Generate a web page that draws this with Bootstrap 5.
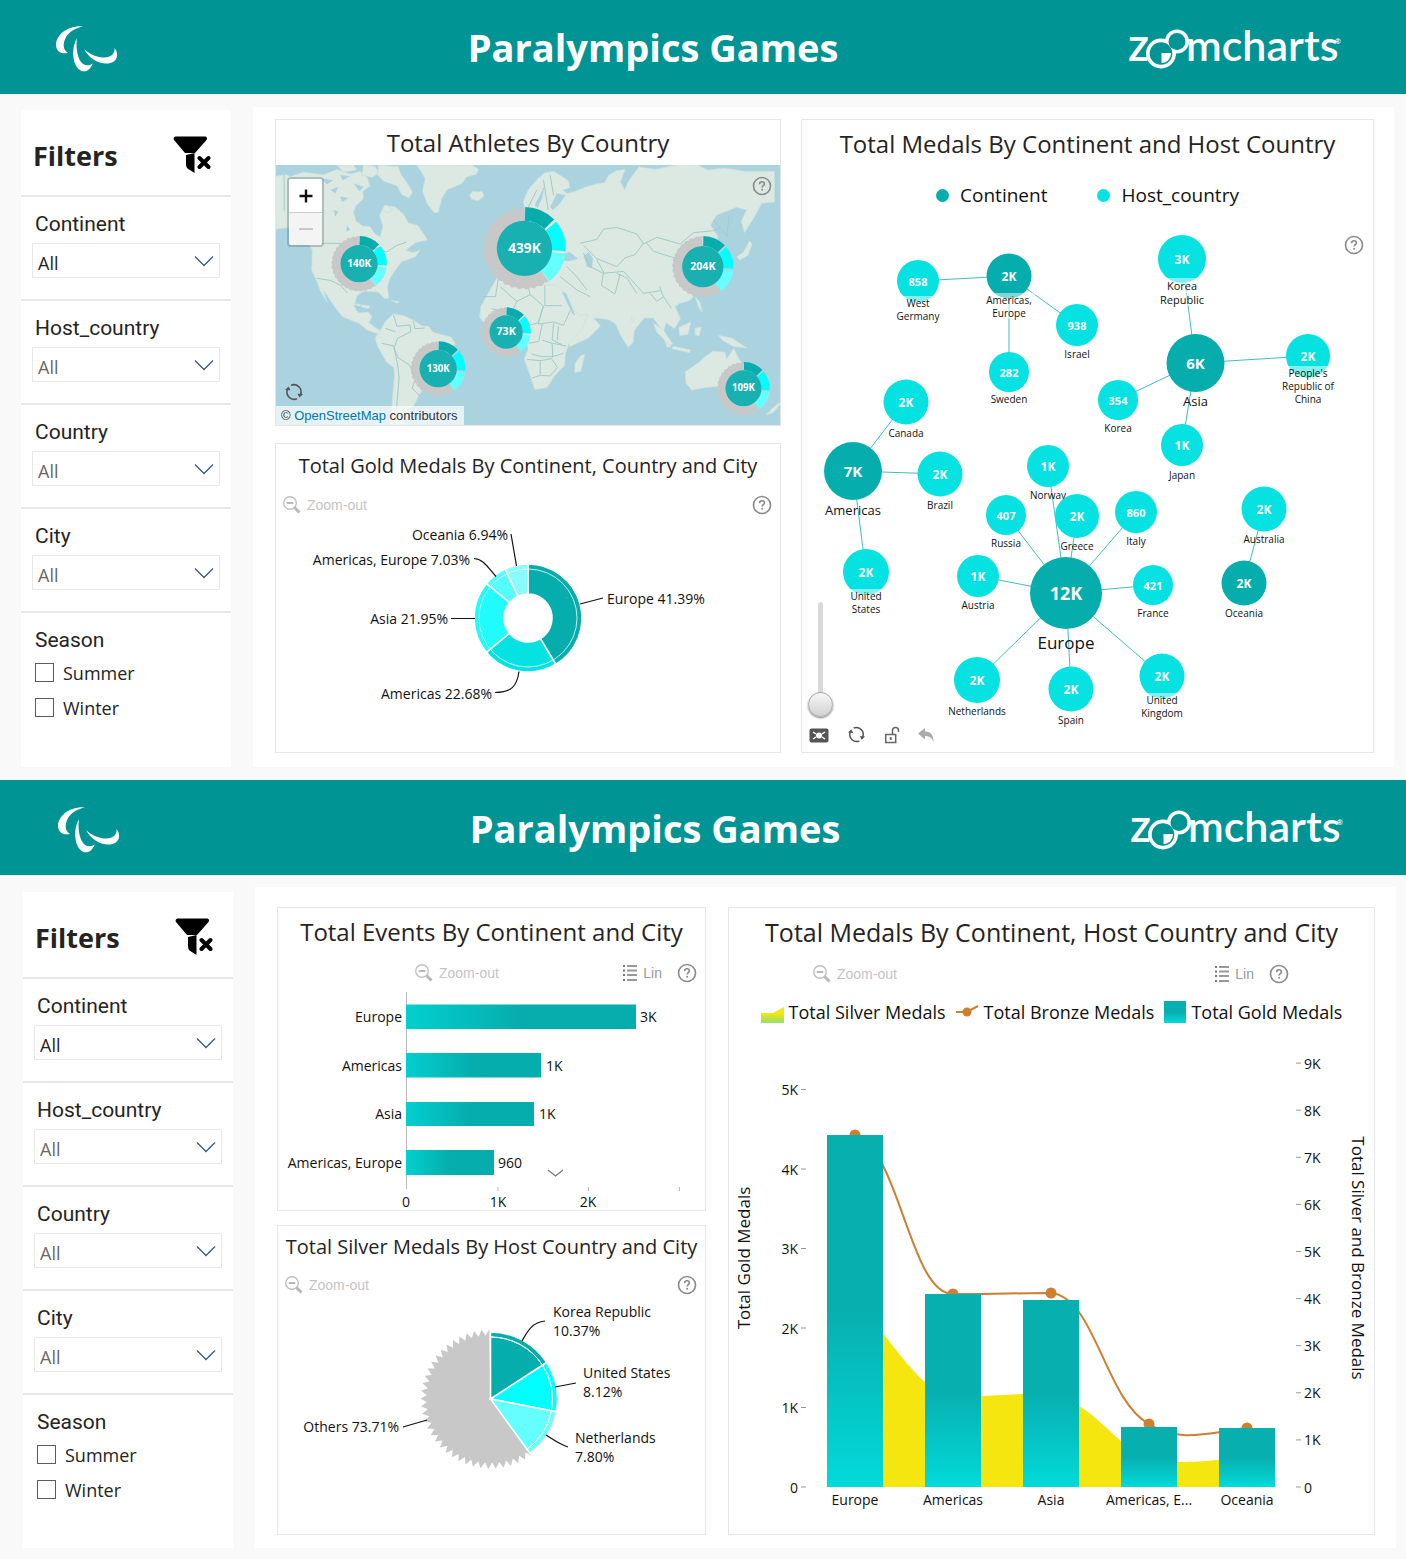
<!DOCTYPE html>
<html lang="en">
<head>
<meta charset="utf-8">
<meta name="viewport" content="width=device-width, initial-scale=1">
<title>Paralympics Games</title>
<link href="https://cdn.jsdelivr.net/npm/bootstrap@5.3.0/dist/css/bootstrap.min.css" rel="stylesheet">
<style>
  :root { --teal: #009494; --deep: #06adad; --aqua: #06e1e1; }
  body { font-family: "Open Sans", "Noto Sans", sans-serif; background: #f9f9f9; color: #252423; }
  .sprite { width: 0; height: 0; }
  .board { min-height: 780px; display: flex; flex-direction: column; }
  .board-second { min-height: 779px; }
  .topbar { height: 94px; background: var(--teal); padding: 0 64px 0 56px; }
  .board-second .topbar { height: 95px; padding: 0 62px 0 58px; }
  .topbar h1 { font-size: 38px; line-height: 48px; font-weight: 700; color: #fff; }
  .agitos-box { width: 124px; }
  .agitos-box svg { display: block; margin-left: -6px; }
  .board-body { padding: 13px 12px 13px 21px; gap: 22px; flex: 1 1 auto; }
  .board-second .board-body { padding: 12px 10px 11px 23px; }
  .side { flex: 0 0 210px; background: #fff; margin-top: 3px; }
  .board-second .side { margin-top: 5px; }
  .side-head { height: 85px; padding: 8px 20px 0 12px; }
  .side-head h2 { font-size: 27px; font-weight: 700; }
  .side-head .tool { margin-top: -4px; }
  .slicer { border-top: 2px solid #e6e6e6; padding: 13px 11px 21px 11px; }
  .slicer-name { font-family: Roboto, sans-serif; font-size: 21px; line-height: 28px; padding-left: 3px; margin-bottom: 5px; }
  .slicer .form-select { height: 35px; border: 1px solid #e8e8e8; border-radius: 0; font-size: 18px; line-height: 24px; padding: 7px 34px 2px 5px; color: #252423;
    --bs-form-select-bg-img: url("data:image/svg+xml,%3Csvg xmlns='http://www.w3.org/2000/svg' viewBox='0 0 20 12'%3E%3Cpath d='M1 1.500l9 9 9-9' fill='none' stroke='%23395a78' stroke-width='1.300'/%3E%3C/svg%3E");
    background-size: 20px 12px; background-position: right 5px center; }
  .slicer .muted-choice { color: #6b6967; }
  .season .form-check { min-height: 0; margin: 0; padding-left: 31px; height: 35px; }
  .season .form-check-input { width: 19px; height: 19px; margin: 4px 0 0 -28px; border: 1px solid #5c5c5c; border-radius: 0; }
  .season .form-check-label { font-size: 18px; line-height: 28px; }
  .stage { background: #fff; padding: 12px 20px 14px 22px; gap: 20px; }
  .board-second .stage { padding: 20px 21px 13px 22px; gap: 22px; }
  .col-a1 { flex: 506 1 0; gap: 17px; }
  .col-a2 { flex: 573 1 0; }
  .col-b1 { flex: 429 1 0; gap: 14px; }
  .col-b2 { flex: 647 1 0; }
  .tile { border: 1px solid #e6e6e6; background: #fff; position: relative; }
  .tile h3 { font-size: 24px; line-height: 48px; font-weight: 400; margin: 0; text-align: center; white-space: nowrap; }
  .map-tile h3 { line-height: 45px; }
  .tile .title-m { font-size: 20px; line-height: 44px; }
  .tile .title-s { font-size: 20px; line-height: 42px; }
  .tile .title-l { font-size: 25px; }
  .tile svg.plot { display: block; width: 100%; height: auto; }
  .tools { height: 34px; padding: 0 8px 0 6px; font-family: "Liberation Sans", Arial, sans-serif; }
  .tools-mid { padding-left: 136px; }
  .tools-wide { height: 36px; padding: 0 85px 0 83px; }
  .tool { border: 0; background: none; padding: 0; display: flex; align-items: center; gap: 5px; font-size: 14px; line-height: 20px; color: #c4c4c4; }
  .tool svg { display: block; }
  .tool-lin { color: #9a9a9a; }
  .tool-gap { margin-right: 15px; }
  .map-box { position: relative; height: 260px; overflow: hidden; background: #aad3df; }
  .map-box svg.plot { height: 100%; }
  .map-help { position: absolute; top: 11px; right: 8px; }
  .zoomer { position: absolute; top: 12px; left: 11px; border: 2px solid rgba(90,110,115,.35); border-radius: 4px; overflow: hidden; }
  .zoomer button { display: block; width: 33px; height: 33px; border: 0; background: #fff; padding: 0; }
  .zoomer button + button { background: #f4f4f4; border-top: 1px solid #ccc; }
  .zoomer svg { display: block; margin: auto; }
  .map-reload { position: absolute; left: 8px; bottom: 23px; }
  .credit { position: absolute; left: 0; bottom: 0; background: rgba(255,255,255,.7); font: 13px/19px "Liberation Sans", Arial, sans-serif; color: #333; padding: 0 6px 0 5px; }
  .credit a { color: #0078a8; text-decoration: none; }
  .key-row { height: 54px; gap: 50px; font-size: 19px; line-height: 28px; color: #111; }
  .key-row span { display: flex; align-items: center; gap: 11px; }
  .dot { width: 13px; height: 13px; border-radius: 50%; background: var(--aqua); }
  .dot-deep { background: var(--deep); }
  .key-wide { height: 40px; gap: 10px; font-size: 18px; line-height: 24px; color: #111; white-space: nowrap; }
  .key-wide span { display: flex; align-items: center; gap: 5px; }
  .net-help { position: absolute; right: 9px; top: 115px; }
  .net-slider { position: absolute; left: 8px; bottom: 35px; width: 22px; height: 115px; }
  .net-slider input { position: absolute; left: -1px; top: 115px; width: 115px; height: 22px; transform: rotate(-90deg); transform-origin: 0 0; margin: 0; appearance: none; background: none; }
  .net-slider input::-webkit-slider-runnable-track { height: 5px; background: #d9d9d9; border-radius: 3px; }
  .net-slider input::-webkit-slider-thumb { appearance: none; width: 25px; height: 25px; margin-top: -10px; border-radius: 50%; border: 1px solid #aaa; background: linear-gradient(90deg, #d2d2d2, #f6f6f6); box-shadow: -1px 0 2px rgba(0,0,0,.5); }
  .net-tools { position: absolute; left: 7px; bottom: 8px; gap: 18px; }
  svg text { font-size: 14px; fill: #111; dominant-baseline: central; }
  svg .num { fill: #fff; font-weight: 700; }
  svg .end { text-anchor: end; }
  svg .mid { text-anchor: middle; }
  svg .axis-name { font-size: 17px; }
  .lead-line { fill: none; stroke: #111; stroke-width: 1.2; }
</style>
</head>
<body>
<svg class="sprite position-absolute" aria-hidden="true">
  <defs>
    <symbol id="agitos" viewBox="50 15 75 60">
      <g fill="#fff"><path d="M83 24.300C66 23.500 56 34 56 43c.3 7 6 9.500 12 7.800-5-2.500-5.500-9-2.300-15C69 29.500 76 26 83 24.300z"/><path d="M77 36c-5.500 9-5 24 1 30.500 5.500 5.500 12 2.500 14.700-5-4.700 3.300-10 2.300-13-3.500C76.500 51 76 43 77 36z"/><path d="M84 47c5 9 13 14.300 22.500 14.500 11 .2 13-9.500 8-15.500.5 6-4 10-11.500 9.500C95 55 89 51.500 84 47z"/></g>
    </symbol>
    <symbol id="zoomcharts" viewBox="1128 20 216 58">
      <g fill="#fff"><circle cx="1163" cy="55.500" r="15"/><circle cx="1179" cy="43.500" r="12"/></g>
      <g fill="#009494"><circle cx="1163" cy="55.500" r="11.300"/><circle cx="1179" cy="43.500" r="8.500"/></g>
      <path d="M1163.500 55h9.500v1a9.500 9.500 0 0 1-9.500 9z" fill="#fff"/>
      <g style="font-family:Lato,sans-serif;font-weight:600"><text x="1130" y="62.500" style="font-size:46px;fill:#fff;dominant-baseline:auto">z</text><text x="1188" y="62.500" style="font-size:43px;fill:#fff;dominant-baseline:auto">mcharts</text><text x="1337" y="46" style="font-size:7px;fill:#fff;dominant-baseline:auto">®</text></g>
    </symbol>
    <symbol id="funnel" viewBox="173 133 38 39">
      <path d="M175.500 134.500h30q2.500 1 1 3.500L195 151h-10L174 138q-1.300-2.500 1.500-3.500zM186 153l8.500-2v20l-7-4.500q-1.500-2-1.500-4z"/><path d="M199.500 156l9 9m0-9l-9 9" stroke="#000" stroke-width="4" stroke-linecap="round"/>
    </symbol>
    <symbol id="help" viewBox="0 0 20 20"><circle cx="10" cy="10" r="8.500" fill="none" stroke="#8a8a8a" stroke-width="1.600"/><path d="M7.600 8.200c0-1.500 1-2.400 2.400-2.400s2.400.9 2.400 2.100c0 1.600-2.300 1.700-2.300 3.500" fill="none" stroke="#8a8a8a" stroke-width="1.600"/><circle cx="10.100" cy="13.700" r="1" fill="#8a8a8a"/></symbol>
    <symbol id="lens" viewBox="0 0 20 20"><circle cx="8" cy="8" r="6.300" fill="none" stroke="#c0c0c0" stroke-width="1.400"/><path d="M4.700 8h6.600" stroke="#b0b0b0" stroke-width="1.800"/><path d="M12.500 12.500l5 5" stroke="#b8b8b8" stroke-width="3"/></symbol>
    <symbol id="rows" viewBox="0 0 16 18"><path d="M1 2h2m-2 4.500h2M1 11h2m-2 5h2" stroke="#777" stroke-width="2"/><path d="M5 2h10M5 6.500h10M5 11h10M5 16h10" stroke="#999" stroke-width="1.800"/></symbol>
    <symbol id="reload" viewBox="0 0 20 20"><path d="M7 3.200a7.300 7.300 0 0 1 9.500 9.500M13 16.800A7.300 7.300 0 0 1 3.500 7.300" fill="none" stroke="#555" stroke-width="1.600"/><path d="M13.500 11.700l5.500.3-3.500 3.500zM6.500 8.300L1 8l3.500-3.500z" fill="#555"/></symbol>
    <linearGradient id="barX"><stop offset="0" stop-color="#02cfcf"/><stop offset=".5" stop-color="#06adad"/></linearGradient>
    <linearGradient id="barY" x1="0" x2="0" y1="0" y2="1"><stop offset=".5" stop-color="#08afaf"/><stop offset="1" stop-color="#02dada"/></linearGradient>
    <linearGradient id="silver" x1="0" x2="0" y1="0" y2="1"><stop offset=".4" stop-color="#f4e60e"/><stop offset="1" stop-color="#8fe070"/></linearGradient>
  </defs>
</svg>

<section class="board">
  <header class="topbar d-flex align-items-center">
    <div class="agitos-box"><svg width="75" height="60" viewBox="0 0 75 60"><use href="#agitos"/></svg></div>
    <h1 class="flex-fill text-center m-0">Paralympics Games</h1>
    <svg width="216" height="58" role="img" aria-label="zoomcharts"><use href="#zoomcharts"/></svg>
  </header>
  <div class="board-body d-flex">
    <aside class="side">
      <div class="side-head d-flex align-items-center justify-content-between"><h2 class="m-0">Filters</h2><button class="tool" aria-label="Clear filters"><svg width="38" height="39"><use href="#funnel"/></svg></button></div>
      <div class="slicer"><label class="slicer-name d-block" for="f1">Continent</label><select class="form-select" id="f1"><option>All</option></select></div>
      <div class="slicer"><label class="slicer-name d-block" for="f2">Host_country</label><select class="form-select muted-choice" id="f2"><option>All</option></select></div>
      <div class="slicer"><label class="slicer-name d-block" for="f3">Country</label><select class="form-select muted-choice" id="f3"><option>All</option></select></div>
      <div class="slicer"><label class="slicer-name d-block" for="f4">City</label><select class="form-select muted-choice" id="f4"><option>All</option></select></div>
      <div class="slicer season" role="group" aria-labelledby="season1"><div class="slicer-name" id="season1">Season</div>
        <div class="form-check"><input class="form-check-input" type="checkbox" id="s1"><label class="form-check-label" for="s1">Summer</label></div>
        <div class="form-check"><input class="form-check-input" type="checkbox" id="s2"><label class="form-check-label" for="s2">Winter</label></div>
      </div>
    </aside>
    <main class="stage d-flex flex-fill">
      <div class="col-a1 d-flex flex-column">
        <div class="tile map-tile">
          <h3>Total Athletes By Country</h3>
          <div class="map-box">
            <svg class="plot" viewBox="16 165 1515 780" preserveAspectRatio="xMidYMid slice">
              <g fill="#dbe9e2" stroke="#c6dfdc" stroke-width="2" stroke-linejoin="round">
                <path d="M16 200l30-8 14 8 40-14 60 8 40-16 40 14 30-8 22 20 8 24-22 16 2 22-24 22-6 20 8 26 20 14 22 2 14 22 16 8 8-30-10-34 16-30 30 4 26 22 14 26 28 8 22 30 8 14-36 8-28 22 18 8 24-8-14 20-42 16-20 26-14 22-8 26 4 34-12 2-20-20-44-2-20 14-8 32 12 18 30-2 12 14-10 18 22 16 14 10-8 8-34-12-24-20-50-20-30-40-22-34-4-2 12 34-22-36-10-28-16-34 2-60-24-46-40-22-45 6z"/>
                <path d="M325 165l60 5 8 24 16 22 18 30-10 18-22-10-14-26-40-14-20-20zM280 165l35 4 10 20-20 14-30-8zM200 165h50l10 14-40 8zM345 285l22 12-10 12-22-8z"/>
                <path d="M440 165h165l20 12-6 16-30 8-14 20-44 18-16 26-10 42-12 2-22-28-14-38 8-36-12-22zM598 256l10-12 14 2 14-2 6 14-18 14-20-4zM695 330l16-8 8 20 14 22-2 16-34 4 12-18zM675 350l14-4 2 22-18 4z"/>
                <path d="M345 635l24-24 32 6 30 14 24 16 20 2 14 18 54 14 12 20-24 40-30 58-32 22-22 34-18 36-22 10-8 42h-38l6-80 6-70-2-20-22-16-28-50-6-24 14-20z"/>
                <path d="M765 300l-6-26 16-36 24-28 24-22 28-4 44 28 4 22-22 6 14 10 24-6 34-14 28-8 26-4 12-22 24-14 26-4-14 38 12 24 14-30 30-40 46 8 60-12 60-6 40 20 50-6 60 10h90v92l-38 4-14 26-20 34-18 28-10-34 16-34-30-8-60 24-18 30 22 32-2 32-30 24-20 14 8 40-10 46-30 38-30 8-14 10 16 36-18 30-26-18-6 24 22 48-12 2-22-60-20-28-26 0-30 36-4 38-16 14-22-36-16-36-24-12-40-4 20 24-36 36-56 26-24-54-16-36-4-34-60-10-40-14 16 36-14 8-34-40-20 22-50 12 4-38 28-16 10-28 40-22 50-16-12-34z"/>
                <path d="M680 505l56-2 26 10 40 12 56 0 28 24 28 54 18 14 22-4-18 44-38 40-12 34-2 34-30 32-24 36-36 6-12-36-20-56 12-32-16-36-20-24-46-4-38 4-26-34 4-32 28-50zM930 738l14-6-12 52-18 4 0-26z"/>
                <path d="M1245 785l44-30 14-14 26-18 36 4 4 20 22-32 16 34 28 28 26 40-8 50-20 22-30-6-20-30-34-24-44 4-40 8-18-22zM1525 880l6 2-22 26-20 6 14-16zM1150 640l28 18 30 44-10 4-38-40zM1208 708l54 12-4 8-52-12zM1226 652l36-16-8 36-26 6zM1345 676l40 8 46 30-40-4-36-20zM1274 655l20-4-8 28-10-4z"/>
                <path d="M250 580l50 8-6 8-30-8zM362 572l26 2-6 6zM1275 560l14 16 8 32-12-16zM1084 620l8 8-4 10-6-6zM1400 440l20-14 18-34 8 10-12 34-26 14z"/>
              </g>
              <g fill="#aad3df"><path d="M940 440l14-14 14 18-2 30-16-4-4-16zM870 434l28-8 26 20-30 8-24-4zM860 250l26 6-16 24-22 20-8-10 12-22zM812 250l12-26-8 40-14 30-8-10zM250 220l30 10-12 14zM180 240l24-10-8 20zM110 220l30-8-14 18zM310 415l20-4 6 14-20 0zM875 545l12 4 28 66-8-2zM150 205l40 6-20 12zM210 260l26 4-20 12zM190 300l14 4-8 16zM230 345l10 14-12 6zM210 195l30 4-22 12z"/></g>
              <g fill="none" stroke="#a2cbc9" stroke-width="3" stroke-linejoin="round">
                <path d="M42 192v110M125 400h165l30 20 30 6 30-20 30-10M140 505l40 6 30 14 22 24M260 600l20-22"/>
                <path d="M370 615l10 34 40-4 2 20-40 20-10 30 12 28 34 22 18 40-10 30 22 22M345 655l30 10M335 700l36 8 12 60 4 36-8 90-4 50M430 632l4 24 30-2"/>
                <path d="M800 240l-30 60M840 195l10 60M820 210l14 90M930 400l50-12 20-30 40-6 60 20 20 30 40-20 70 20 40-34 60-6 20-10M1120 400l-26 34-30 10-24 26-60-24-40-40M1130 400l20 24 70 22 60-26 4-40M940 430l20 40 40 20 60-6 60 66 50-8M980 450l20 36-6 40 40 26 16-60M1040 490l30 14 30 46M890 470l30 30 30 40M870 500l50 40 40 20M1140 550l20 24 20-14 24 36M1180 560l-12-30M1330 330l40 50 6-60"/>
                <path d="M640 560h36l8-52M690 530l50 44-16 36-60-14M740 574l40-20-10-40M824 527v60l50 0M780 554l40 34-16 50-46 14M675 600l2 38M700 600l10 36M820 588l-16 54 46-6 30 10 20-44M850 640l-4 50 30 14M776 700l30-6 10-52M816 690l30 10 2 40-34 0-30-8M770 748l40 4 0 44-24 8M810 752l34-6 18 26-22 26-28-2M848 700l40 8M846 740l34-10M865 650l-4 40"/>
              </g>
              <g id="map-markers"></g>
            </svg>
            <div class="zoomer"><button aria-label="Zoom in"><svg width="16" height="16"><path d="M8 1.500v13M1.500 8h13" stroke="#111" stroke-width="2.400"/></svg></button><button aria-label="Zoom out"><svg width="16" height="16"><path d="M1 8h14" stroke="#bbb" stroke-width="1.600"/></svg></button></div>
            <button class="tool map-help" aria-label="Help"><svg width="20" height="20"><use href="#help"/></svg></button>
            <button class="tool map-reload" aria-label="Reload map"><svg width="20" height="20"><use href="#reload"/></svg></button>
            <div class="credit">© <a href="#">OpenStreetMap</a> contributors</div>
          </div>
        </div>
        <div class="tile flex-fill">
          <h3 class="title-m">Total Gold Medals By Continent, Country and City</h3>
          <div class="tools d-flex align-items-center justify-content-between"><button class="tool"><svg width="20" height="20"><use href="#lens"/></svg>Zoom-out</button><button class="tool" aria-label="Help"><svg width="20" height="20"><use href="#help"/></svg></button></div>
          <svg class="plot" viewBox="276 522 504 228">
            <g id="gold-ring"></g>
            <path class="lead-line" d="M511 534l5.500 32M474 558.500c9 0 14 9 22 18M451 618.500h24M495 692.500c16 0 22-6 24-21M580 604l23-6"/>
            <text class="end" x="508" y="534">Oceania 6.94%</text><text class="end" x="470" y="559">Americas, Europe 7.03%</text><text class="end" x="448" y="618">Asia 21.95%</text><text class="end" x="492" y="693">Americas 22.68%</text><text x="607" y="598">Europe 41.39%</text>
          </svg>
        </div>
      </div>
      <div class="col-a2 d-flex">
        <div class="tile flex-fill">
          <h3>Total Medals By Continent and Host Country</h3>
          <div class="key-row d-flex align-items-center justify-content-center"><span><i class="dot dot-deep"></i>Continent</span><span><i class="dot"></i>Host_country</span></div>
          <svg class="plot" viewBox="802 222 571 529"><g id="network"></g></svg>
          <button class="tool net-help" aria-label="Help"><svg width="20" height="20"><use href="#help"/></svg></button>
          <div class="net-slider"><input type="range" min="0" max="100" value="0" aria-label="Zoom level"></div>
          <div class="net-tools d-flex align-items-center">
            <button class="tool" aria-label="Fit to view"><svg width="20" height="18"><rect x=".5" y="2.500" width="19" height="14" rx="2" fill="#555"/><circle cx="10" cy="9.500" r="3" fill="#fff"/><path d="M4 6l3 2m6 3l3 2m0-7l-3 2m-6 3l-3 2" stroke="#fff" stroke-width="1.500"/></svg></button>
            <button class="tool" aria-label="Reload"><svg width="19" height="19" viewBox="0 0 20 20"><use href="#reload"/></svg></button>
            <button class="tool" aria-label="Unlock"><svg width="16" height="18"><path d="M1.700 8.500h10v8h-10z" fill="none" stroke="#666" stroke-width="1.500"/><path d="M8.500 8V4.500c0-4 6-4 6 0V6" fill="none" stroke="#666" stroke-width="1.500"/><path d="M6.700 11v3" stroke="#666" stroke-width="1.800"/></svg></button>
            <button class="tool" aria-label="Back"><svg width="16" height="16"><path d="M0 6.500L7 1v3.500c6 0 8.500 4 8.500 10.500C14 11 11.500 9 7 9v3.500z" fill="#aaa"/></svg></button>
          </div>
        </div>
      </div>
    </main>
  </div>
</section>

<section class="board board-second">
  <header class="topbar d-flex align-items-center">
    <div class="agitos-box"><svg width="75" height="60" viewBox="0 0 75 60"><use href="#agitos"/></svg></div>
    <h1 class="flex-fill text-center m-0">Paralympics Games</h1>
    <svg width="216" height="58" role="img" aria-label="zoomcharts"><use href="#zoomcharts"/></svg>
  </header>
  <div class="board-body d-flex">
    <aside class="side">
      <div class="side-head d-flex align-items-center justify-content-between"><h2 class="m-0">Filters</h2><button class="tool" aria-label="Clear filters"><svg width="38" height="39"><use href="#funnel"/></svg></button></div>
      <div class="slicer"><label class="slicer-name d-block" for="g1">Continent</label><select class="form-select" id="g1"><option>All</option></select></div>
      <div class="slicer"><label class="slicer-name d-block" for="g2">Host_country</label><select class="form-select muted-choice" id="g2"><option>All</option></select></div>
      <div class="slicer"><label class="slicer-name d-block" for="g3">Country</label><select class="form-select muted-choice" id="g3"><option>All</option></select></div>
      <div class="slicer"><label class="slicer-name d-block" for="g4">City</label><select class="form-select muted-choice" id="g4"><option>All</option></select></div>
      <div class="slicer season" role="group" aria-labelledby="season2"><div class="slicer-name" id="season2">Season</div>
        <div class="form-check"><input class="form-check-input" type="checkbox" id="t1"><label class="form-check-label" for="t1">Summer</label></div>
        <div class="form-check"><input class="form-check-input" type="checkbox" id="t2"><label class="form-check-label" for="t2">Winter</label></div>
      </div>
    </aside>
    <main class="stage d-flex flex-fill">
      <div class="col-b1 d-flex flex-column">
        <div class="tile">
          <h3>Total Events By Continent and City</h3>
          <div class="tools tools-mid d-flex align-items-center"><button class="tool me-auto"><svg width="20" height="20"><use href="#lens"/></svg>Zoom-out</button><button class="tool tool-lin tool-gap"><svg width="16" height="18"><use href="#rows"/></svg>Lin</button><button class="tool" aria-label="Help"><svg width="20" height="20"><use href="#help"/></svg></button></div>
          <svg class="plot" viewBox="278 990 427 220">
            <path d="M406.500 992v197M498 1187v4M588.500 1187v4M679.500 1187v4" stroke="#b8b8b8"/>
            <g fill="url(#barX)"><rect x="406" y="1004.500" width="230" height="24.500"/><rect x="406" y="1053" width="135" height="24.500"/><rect x="406" y="1102" width="128" height="24"/><rect x="406" y="1150" width="88" height="25"/></g>
            <text class="end" x="402" y="1016">Europe</text><text class="end" x="402" y="1065">Americas</text><text class="end" x="402" y="1113">Asia</text><text class="end" x="402" y="1162">Americas, Europe</text>
            <text x="640" y="1016">3K</text><text x="546" y="1065">1K</text><text x="539" y="1113">1K</text><text x="498" y="1162">960</text>
            <text class="mid" x="406" y="1201">0</text><text class="mid" x="498" y="1201">1K</text><text class="mid" x="588" y="1201">2K</text>
            <path d="M548 1170l7.500 6 7.500-6" fill="none" stroke="#777" stroke-width="1.200"/>
          </svg>
        </div>
        <div class="tile flex-fill">
          <h3 class="title-s">Total Silver Medals By Host Country and City</h3>
          <div class="tools d-flex align-items-center justify-content-between"><button class="tool"><svg width="20" height="20"><use href="#lens"/></svg>Zoom-out</button><button class="tool" aria-label="Help"><svg width="20" height="20"><use href="#help"/></svg></button></div>
          <svg class="plot" viewBox="278 1302 427 230">
            <g id="silver-pie"></g>
            <path class="lead-line" d="M522 1341c5-9 10-19 23-20M555 1387l21-4M546 1435c8 5 13 9 22 12M403 1427l24-7"/>
            <text x="553" y="1311">Korea Republic</text><text x="553" y="1330">10.37%</text><text x="583" y="1372">United States</text><text x="583" y="1391">8.12%</text><text x="575" y="1437">Netherlands</text><text x="575" y="1456">7.80%</text><text class="end" x="399" y="1426">Others 73.71%</text>
          </svg>
        </div>
      </div>
      <div class="col-b2 d-flex">
        <div class="tile flex-fill">
          <h3 class="title-l">Total Medals By Continent, Host Country and City</h3>
          <div class="tools tools-wide d-flex align-items-center"><button class="tool me-auto"><svg width="20" height="20"><use href="#lens"/></svg>Zoom-out</button><button class="tool tool-lin tool-gap"><svg width="16" height="18"><use href="#rows"/></svg>Lin</button><button class="tool" aria-label="Help"><svg width="20" height="20"><use href="#help"/></svg></button></div>
          <div class="key-wide d-flex align-items-center justify-content-center">
            <span><svg width="23" height="22"><path d="M0 12h12l11-6v16H0z" fill="url(#silver)"/></svg>Total Silver Medals</span>
            <span><svg width="23" height="22"><path d="M0 11h11l11-6" fill="none" stroke="#cd7f32" stroke-width="2"/><circle cx="11" cy="11" r="4.500" fill="#cd7f32"/></svg>Total Bronze Medals</span>
            <span><svg width="22" height="22"><path d="M0 0h22v22H0z" fill="url(#barY)"/></svg>Total Gold Medals</span>
          </div>
          <svg class="plot" viewBox="729 1032 645 500">
            <path d="M855 1302C875 1318 900 1360 925 1382C938 1394 960 1397 981 1396L1023 1394C1050 1390 1060 1394 1079 1406C1095 1416 1106 1428 1121 1441C1140 1460 1160 1462 1177 1462C1195 1462 1205 1461 1219 1460L1247 1458V1487H855Z" fill="#f4e60e"/>
            <path d="M855 1135C900 1150 910 1294 953 1294C980 1294.500 1020 1293 1051 1293C1095 1297 1105 1400 1149 1424C1180 1444 1210 1432 1247 1428" fill="none" stroke="#cd7f32" stroke-width="2"/>
            <g fill="#cd7f32"><circle cx="855" cy="1135" r="5.500"/><circle cx="953" cy="1294" r="5.500"/><circle cx="1149" cy="1424" r="5.500"/><circle cx="1247" cy="1428" r="5.500"/></g>
            <g fill="url(#barY)"><rect x="827" y="1135" width="56" height="352"/><rect x="925" y="1294" width="56" height="193"/><rect x="1023" y="1300" width="56" height="187"/><rect x="1121" y="1427" width="56" height="60"/><rect x="1219" y="1428" width="56" height="59"/></g>
            <circle cx="1051" cy="1293" r="5.500" fill="#cd7f32"/>
            <g id="axes"></g>
            <text class="mid" x="855" y="1499">Europe</text><text class="mid" x="953" y="1499">Americas</text><text class="mid" x="1051" y="1499">Asia</text><text class="mid" x="1149" y="1499">Americas, E...</text><text class="mid" x="1247" y="1499">Oceania</text>
            <text class="mid axis-name" transform="translate(743 1258) rotate(-90)">Total Gold Medals</text>
            <text class="mid axis-name" transform="translate(1358 1258) rotate(90)">Total Silver and Bronze Medals</text>
          </svg>
        </div>
      </div>
    </main>
  </div>
</section>

<script src="https://cdn.jsdelivr.net/npm/bootstrap@5.3.0/dist/js/bootstrap.bundle.min.js"></script>
<script>
  const pt = (cx, cy, r, deg) => {
    const a = (deg - 90) * Math.PI / 180;
    return (cx + r * Math.cos(a)).toFixed(2) + ' ' + (cy + r * Math.sin(a)).toFixed(2);
  };
  // Ring sector from inner radius r0 to outer radius r1.
  function sector(cx, cy, r0, r1, a0, a1, fill, stroke) {
    const big = a1 - a0 > 180 ? 1 : 0;
    return `<path d="M${pt(cx, cy, r1, a0)}A${r1} ${r1} 0 ${big} 1 ${pt(cx, cy, r1, a1)}L${pt(cx, cy, r0, a1)}A${r0} ${r0} 0 ${big} 0 ${pt(cx, cy, r0, a0)}Z" fill="${fill}" ${stroke ? `stroke="#fff" stroke-width="${stroke}"` : ''}/>`;
  }
  // The "others" slice, with a toothed edge between radii lo and hi.
  function toothed(cx, cy, lo, hi, a0, a1, teeth, round) {
    let p = [pt(cx, cy, 0, 0)];
    for (let i = 0; i <= teeth; i++) {
      const a = a0 + (a1 - a0) * i / teeth;
      p.push(pt(cx, cy, hi, a));
      if (i < teeth) p.push(pt(cx, cy, lo, a + (a1 - a0) / teeth * .45));
    }
    return `<path d="M${p.join('L')}Z" fill="#c8c8c8" stroke="#c8c8c8" stroke-width="${round}" stroke-linejoin="round"/>`;
  }
  const put = (id, s) => document.getElementById(id).innerHTML = s;

  put('map-markers', [[763,415,83,124,'439K',41],[267,461,56,83,'140K',30],[1298,470,62,92,'204K',32],[708,666,50,74,'73K',32],[504,776,56,82,'130K',29],[1420,835,54,79,'109K',29]].map(([x, y, r0, r1, t, f]) =>
    toothed(x, y, r1 * .94, r1 * .985, 145, 358, 20, 4) +
    sector(x, y, r0, r1, 1, 46, '#06adad') + sector(x, y, r0, r1, 50, 94, '#0ff') + sector(x, y, r0, r1, 98, 143, '#66ffff') +
    `<circle cx="${x}" cy="${y}" r="${r0}" fill="#18b0b0"/><text class="num mid" x="${x}" y="${y - 2}" style="font-size:${f}px">${t}</text>`).join(''));

  put('gold-ring', [[0,149,'#06adad'],[149,230.6,'#06e1e1'],[230.6,309.7,'#20fcfc'],[309.7,335,'#55fcfc'],[335,360,'#88fcfc']].map(([a, b, c]) =>
    sector(528, 618, 24, 54, a, b, c, 1.6)).join('') + '<circle cx="528" cy="618" r="49" fill="none" stroke="#fff" stroke-width="1" opacity=".75"/>');

  put('silver-pie', toothed(490.5, 1399, 63.5, 70, 144, 359, 34, 0) +
    [[0,57,'#06adad'],[57,101,'#0ff'],[101,144,'#66ffff']].map(([a, b, c]) => sector(490.5, 1399, 0, 67, a, b, c, 1.6) + sector(490.5, 1399, 62, 62, a, b, 'none', 1)).join(''));

  const nodes = {
    wg:[918,281,21,'858','West|Germany',303,10], ae:[1009,276,22.5,'2K','Americas,|Europe',300,10], is:[1077,325,21,'938','Israel',354,10], sw:[1009,372,20,'282','Sweden',399,10],
    kr:[1182,259,24,'3K','Korea|Republic',285,11], as:[1195.5,363,29,'6K','Asia',401,13,1], cn:[1308,356,22,'2K',"People's|Republic of|China",373,10], ko:[1118,400,20,'354','Korea',428,10], jp:[1182,445,21,'1K','Japan',475,10],
    ca:[906,402,22.5,'2K','Canada',433,10], am:[853,471,29,'7K','Americas',510,13,1], br:[940,474,22.5,'2K','Brazil',505,10], us:[866,572,23,'2K','United|States',596,10],
    no:[1048,466,21,'1K','Norway',495,10], ru:[1006,515,20,'407','Russia',543,10], gr:[1077,516,22,'2K','Greece',546,10], it:[1136,512,21,'860','Italy',541,10], au:[978,576,21,'1K','Austria',605,10],
    eu:[1066,593,36,'12K','Europe',642,17,1], fr:[1153,585,20,'421','France',613,10], nl:[977,680,23,'2K','Netherlands',711,10], sp:[1071,689,22.5,'2K','Spain',720,10], uk:[1162,676,22.5,'2K','United|Kingdom',700,10],
    at:[1264,509,22.5,'2K','Australia',539,10], oc:[1244,583,22.5,'2K','Oceania',613,10,1]
  };
  nodes.ae[7] = 1;
  const links = 'wg-ae is-ae sw-ae kr-as cn-as ko-as jp-as ca-am br-am us-am no-eu ru-eu gr-eu it-eu au-eu fr-eu nl-eu sp-eu uk-eu at-oc'.split(' ');
  put('network', links.map(l => {
    const [a, b] = l.split('-').map(k => nodes[k]);
    return `<path d="M${a[0]} ${a[1]}L${b[0]} ${b[1]}" stroke="#2bb5b5" stroke-width=".9"/>`;
  }).join('') + Object.values(nodes).map(([x, y, r, v, name, ly, f, deep]) => {
    const lines = name.split('|'), step = f > 10 ? 14 : 13;
    return `<circle cx="${x}" cy="${y}" r="${r}" fill="${deep ? '#06adad' : '#06e1e1'}"/><text class="num mid" x="${x}" y="${y}" style="font-size:${r > 30 ? 18 : r > 25 ? 15 : v.length > 2 ? 11 : 12}px">${v}</text>` +
      (lines.length > 1 ? `<rect x="${x - 26}" y="${ly - 7}" width="52" height="${lines.length * step}" fill="#fff" opacity=".5"/>` : '') +
      lines.map((t, i) => `<text class="mid" x="${x}" y="${ly + i * step}" style="font-size:${f}px">${t}</text>`).join('');
  }).join(''));

  const label = n => n ? n + 'K' : '0';
  let axes = '';
  for (let i = 0; i < 6; i++) { const y = 1487 - i * 79.5; axes += `<path d="M801 ${y}h5" stroke="#999"/><text class="end" x="798" y="${y}">${label(i)}</text>`; }
  for (let i = 0; i < 10; i++) { const y = 1487 - i * 47.1; axes += `<path d="M1296 ${y}h5" stroke="#999"/><text x="1304" y="${y}">${label(i)}</text>`; }
  put('axes', axes);
</script>
</body>
</html>
